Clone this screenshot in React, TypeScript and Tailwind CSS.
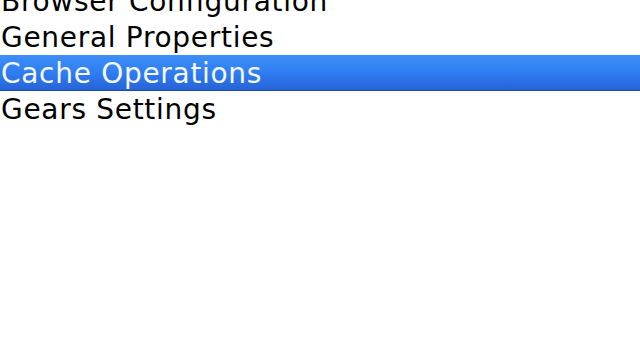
const items = ['Browser Configuration', 'General Properties', 'Cache Operations', 'Gears Settings']

export default function App() {
  const selected = 2
  return (
    <div className="w-[640px] h-[360px] overflow-hidden bg-white font-['DejaVu_Sans',sans-serif]">
      <ul className="-mt-[17px]">
        {items.map((label, i) => (
          <li
            key={label}
            className={
              i === selected
                ? 'h-[36px] pt-[2px] leading-[34px] text-[28px] tracking-[0.7px] pl-px text-[#f4f8ff] bg-gradient-to-b from-[#3f8ff7] via-[#2f7df2] to-[#2763d6] border-b border-[#1d4aa8] whitespace-nowrap'
                : 'h-[36px] pt-[2px] leading-[34px] text-[28px] tracking-[0.7px] pl-px text-black whitespace-nowrap'
            }
          >
            {label}
          </li>
        ))}
      </ul>
    </div>
  )
}
